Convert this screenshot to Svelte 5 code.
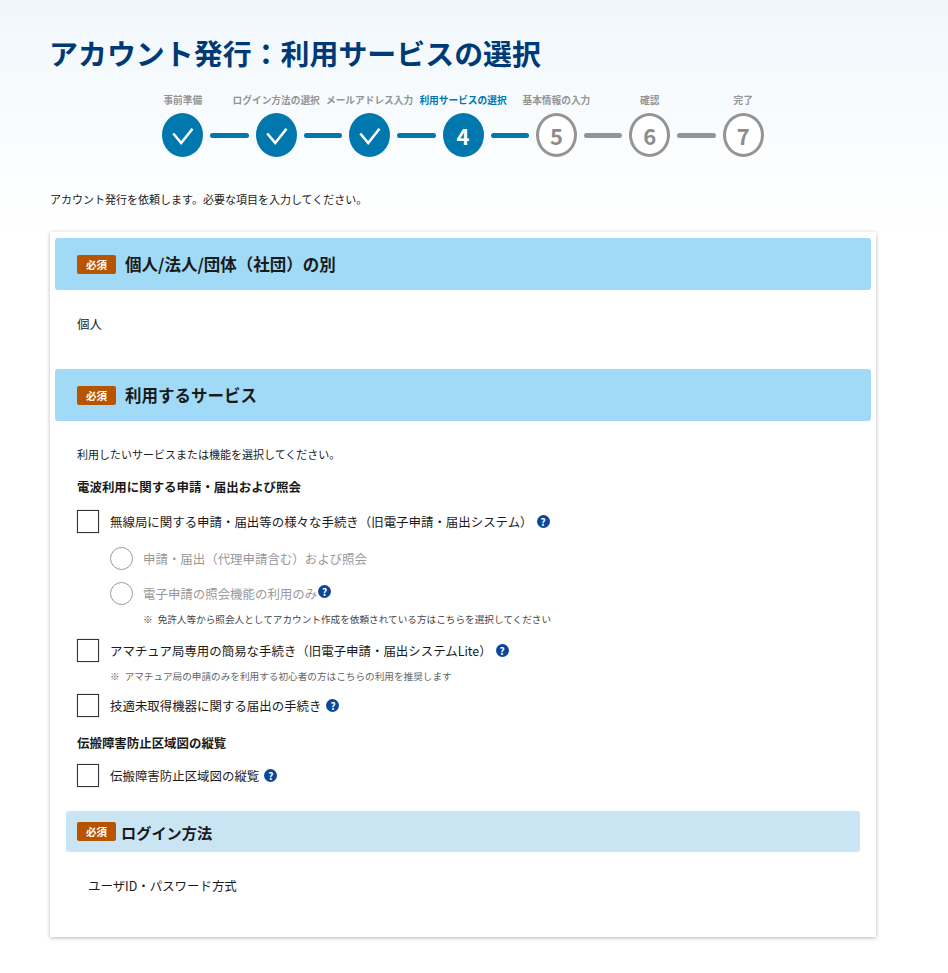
<script>
  const steps = [
    { label: '事前準備', state: 'done' },
    { label: 'ログイン方法の選択', state: 'done' },
    { label: 'メールアドレス入力', state: 'done' },
    { label: '利用サービスの選択', state: 'current', n: 4 },
    { label: '基本情報の入力', state: 'todo', n: 5 },
    { label: '確認', state: 'todo', n: 6 },
    { label: '完了', state: 'todo', n: 7 }
  ];
</script>

<div class="page">
  <h1>アカウント発行：利用サービスの選択</h1>

  <div class="stepper">
    <div class="labels">
      {#each steps as s}
        <span class="label" class:on={s.state === 'current'}>{s.label}</span>
      {/each}
    </div>
    <div class="track">
      {#each steps as s, i}
        <span class="circle {s.state}">
          {#if s.state === 'done'}
            <svg width="25" height="25" viewBox="0 0 25 25" aria-hidden="true"><path d="M3.3 10.5 L11.2 20 L22.5 5.8" fill="none" stroke="#fff" stroke-width="2.6"/></svg>
          {:else}
            {s.n}
          {/if}
        </span>
        {#if i < steps.length - 1}
          <span class="line" class:grey={i >= 4}></span>
        {/if}
      {/each}
    </div>
  </div>

  <p class="intro">アカウント発行を依頼します。必要な項目を入力してください。</p>

  <section class="card">
    <h2 class="head"><span class="badge">必須</span>個人/法人/団体（社団）の別</h2>
    <p class="value first">個人</p>

    <h2 class="head second"><span class="badge">必須</span>利用するサービス</h2>
    <div class="services">
      <p class="lead">利用したいサービスまたは機能を選択してください。</p>
      <h3 class="group">電波利用に関する申請・届出および照会</h3>

      <div class="row opt1"><span class="check"></span><span class="text">無線局に関する申請・届出等の様々な手続き（旧電子申請・届出システム）</span><span class="help wide">?</span></div>
      <div class="row radio-row r1"><span class="radio"></span><span class="text dim">申請・届出（代理申請含む）および照会</span></div>
      <div class="row radio-row r2"><span class="radio"></span><span class="text dim">電子申請の照会機能の利用のみ</span><span class="help tight">?</span></div>
      <p class="note n1"><span>※</span>免許人等から照会人としてアカウント作成を依頼されている方はこちらを選択してください</p>

      <div class="row opt2"><span class="check"></span><span class="text">アマチュア局専用の簡易な手続き（旧電子申請・届出システムLite）</span><span class="help wide">?</span></div>
      <p class="note n2"><span>※</span>アマチュア局の申請のみを利用する初心者の方はこちらの利用を推奨します</p>
      <div class="row opt3"><span class="check"></span><span class="text">技適未取得機器に関する届出の手続き</span><span class="help">?</span></div>

      <h3 class="group g2">伝搬障害防止区域図の縦覧</h3>
      <div class="row opt4"><span class="check"></span><span class="text">伝搬障害防止区域図の縦覧</span><span class="help">?</span></div>
    </div>

    <h2 class="head sub"><span class="badge">必須</span>ログイン方法</h2>
    <p class="value last">ユーザID・パスワード方式</p>
  </section>
</div>

<style>
  :global(body) {
    margin: 0;
    background: #fff;
  }
  .page {
    box-sizing: border-box;
    width: 948px;
    height: 973px;
    overflow: hidden;
    padding: 30px 72px 0 50px;
    font-family: "Noto Sans CJK JP", "Noto Sans", sans-serif;
    color: #1a1a1a;
    background: linear-gradient(180deg, #f0f7fb 0, #f9fcfe 130px, #fff 235px);
  }
  h1 {
    margin: 0 0 0 -1px;
    font-size: 28.95px;
    line-height: 44px;
    font-weight: 700;
    color: #003a76;
  }
  .stepper {
    margin-top: 19px;
    display: flex;
    flex-direction: column;
    align-items: center;
  }
  .labels {
    display: grid;
    grid-template-columns: repeat(7, 93.4px);
    justify-items: center;
  }
  .label {
    font-size: 9.7px;
    line-height: 14px;
    font-weight: 700;
    color: #949494;
    white-space: nowrap;
  }
  .label.on { color: #0077ad; }
  .track {
    margin-top: 6px;
    display: flex;
    align-items: center;
    gap: 7px;
  }
  .circle {
    box-sizing: border-box;
    flex: none;
    width: 41px;
    height: 44px;
    border-radius: 50%;
    display: flex;
    align-items: center;
    justify-content: center;
    font-size: 22px;
    font-weight: 700;
    line-height: 1;
  }
  .done, .current { background: #0077ad; color: #fff; }
  .todo {
    background: #fff;
    border: 3px solid #949494;
    color: #8c8c8c;
  }
  .line {
    flex: none;
    width: 38.4px;
    height: 5px;
    border-radius: 3px;
    background: #0077ad;
  }
  .line.grey { background: #949494; }
  .intro {
    margin: 34px 0 0;
    font-size: 11px;
    line-height: 16px;
  }
  .card {
    margin-top: 25px;
    height: 705px;
    box-sizing: border-box;
    padding: 6px 5px 0;
    background: #fff;
    box-shadow: 0 1px 4px rgba(0, 0, 0, 0.28);
  }
  .head {
    margin: 0;
    height: 52px;
    display: flex;
    align-items: center;
    padding-left: 22px;
    background: #a1daf7;
    border-radius: 3px;
    font-size: 16.5px;
    font-weight: 700;
    color: #1a1a1a;
  }
  .badge {
    flex: none;
    width: 39px;
    height: 19px;
    margin-right: 9px;
    border-radius: 2px;
    background: #b85400;
    color: #fff;
    font-size: 10.5px;
    font-weight: 700;
    line-height: 19px;
    text-align: center;
  }
  .value {
    margin: 0;
    font-size: 12.45px;
    line-height: 18px;
  }
  .value.first { padding: 25px 0 0 22px; height: 54px; }
  .second { margin-top: 0; }
  .services { padding: 0 0 0 22px; }
  .lead {
    margin: 24px 0 0;
    font-size: 11px;
    line-height: 18px;
  }
  .group {
    margin: 15px 0 0;
    font-size: 12.45px;
    line-height: 18px;
    font-weight: 700;
  }
  .row {
    display: flex;
    align-items: center;
    font-size: 12.45px;
  }
  .text { line-height: 18px; white-space: nowrap; }
  .dim { color: #999; }
  .check {
    box-sizing: border-box;
    flex: none;
    width: 22px;
    height: 23px;
    margin-right: 11px;
    border: 1.5px solid #333;
    background: #fff;
    box-shadow: 0 0 1px rgba(0, 0, 0, 0.4);
  }
  .radio {
    box-sizing: border-box;
    flex: none;
    width: 23px;
    height: 23px;
    margin-right: 10px;
    border: 1.5px solid #999;
    border-radius: 50%;
  }
  .radio-row { padding-left: 33px; }
  .opt1 { margin-top: 14px; }
  .r1 { margin-top: 14px; }
  .r2 { margin-top: 12px; }
  .help {
    flex: none;
    width: 13px;
    height: 13px;
    margin-left: 5px;
    border-radius: 50%;
    background: #0b479b;
    color: #fff;
    font-size: 10px;
    font-weight: 700;
    line-height: 13px;
    text-align: center;
  }
  .help.wide { margin-left: 4px; }
  .help.tight { margin: -4px 0 0 1px; }
  .note {
    margin: 0;
    font-size: 9.65px;
    line-height: 14px;
    white-space: nowrap;
    color: #444;
  }
  .note span { margin-right: 5px; }
  .n1 { margin: 7px 0 0 66px; }
  .opt2 { margin-top: 13px; }
  .n2 { margin: 7px 0 0 33px; color: #666; }
  .opt3 { margin-top: 11px; }
  .g2 { margin-top: 17px; }
  .opt4 { margin-top: 12px; }
  .sub {
    margin: 24px 11px 0;
    height: 41px;
    background: #c9e5f3;
    padding-left: 11px;
    font-size: 15.2px;
  }
  .sub .badge { margin-right: 5px; }
  .value.last { padding: 25px 0 0 33px; }
</style>
